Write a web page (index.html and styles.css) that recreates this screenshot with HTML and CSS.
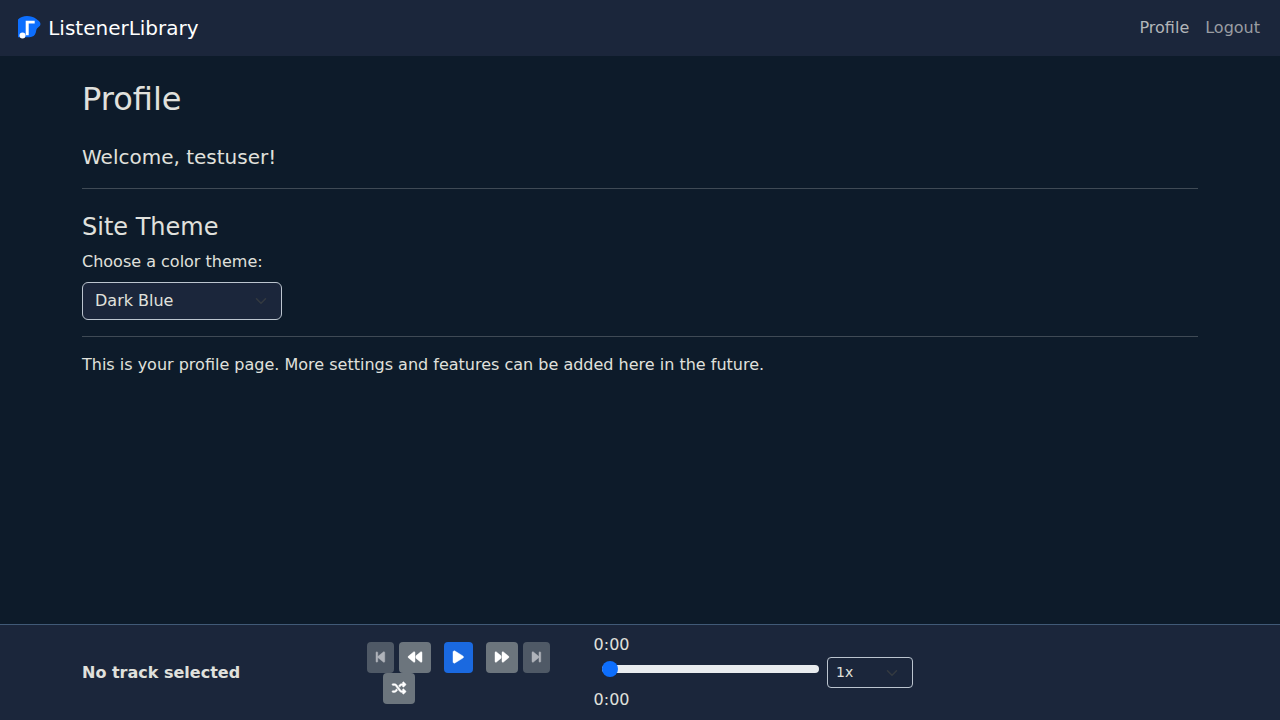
FILE: index.html
```html
<!DOCTYPE html>
<html lang="en">
<head>
<meta charset="utf-8">
<title>Profile - ListenerLibrary</title>
<link rel="stylesheet" href="styles.css">
</head>
<body>
<nav class="navbar">
  <a class="brand">
    <svg class="logo" width="24" height="24" viewBox="0 0 24 24">
      <path fill="#0d6efd" d="M1 3.500C3 1.200 6.500 0 10 0c3.500 0 6.500.8 9 2.700 2 1.500 4.500 3 4.500 5.300 0 2.200-2.300 3-3.500 4.400-.9 1.100-.8 2.600-1.200 4.200-.8 3-2.900 4.600-6.400 4.600H1z"/>
      <path fill="#fff" d="M8.700 4.700h9v2.700h-6v11.800h-3z"/>
      <circle cx="5.500" cy="19.500" r="3" fill="#fff"/>
    </svg>
    <span>ListenerLibrary</span>
  </a>
  <div class="links"><a class="link active">Profile</a><a class="link">Logout</a></div>
</nav>
<main class="content">
  <h1>Profile</h1>
  <p class="lead">Welcome, testuser!</p>
  <hr>
  <h2>Site Theme</h2>
  <div class="label">Choose a color theme:</div>
  <div class="select theme"><span>Dark Blue</span>
    <svg width="16" height="12" viewBox="0 0 16 16"><path d="m2 5 6 6 6-6"/></svg>
  </div>
  <hr>
  <p class="note">This is your profile page. More settings and features can be added here in the future.</p>
</main>
<footer class="player">
  <strong class="track">No track selected</strong>
  <div class="controls">
    <div class="buttons">
      <button class="btn step" disabled><svg width="8.750" height="14" viewBox="0 0 320 512"><path d="M267.500 440.600c9.500 7.900 22.800 9.700 34.100 4.400s18.400-16.600 18.400-29V96c0-12.400-7.200-23.700-18.400-29s-24.500-3.600-34.100 4.400l-192 160L64 241V96c0-17.700-14.300-32-32-32S0 78.300 0 96V416c0 17.700 14.300 32 32 32s32-14.300 32-32V271l11.500 9.600 192 160z"/></svg></button>
      <button class="btn"><svg width="14" height="14" viewBox="0 0 512 512"><path d="M459.500 440.600c9.500 7.900 22.800 9.700 34.100 4.400s18.400-16.600 18.400-29V96c0-12.400-7.200-23.700-18.400-29s-24.500-3.600-34.100 4.400L288 214.300V297.700L459.500 440.600zM256 352V96c0-12.400-7.200-23.700-18.400-29s-24.500-3.600-34.100 4.400l-192 160C4.200 237.500 0 246.500 0 256s4.200 18.500 11.500 24.600l192 160c9.500 7.900 22.800 9.700 34.100 4.400s18.400-16.600 18.400-29V352z"/></svg></button>
      <button class="btn play"><svg width="10.500" height="14" viewBox="0 0 384 512"><path d="M73 39c-14.800-9.100-33.400-9.400-48.500-.9S0 62.600 0 80V432c0 17.400 9.400 33.400 24.500 41.900s33.700 8.100 48.500-.9L361 297c14.300-8.700 23-24.200 23-41s-8.700-32.200-23-41L73 39z"/></svg></button>
      <button class="btn"><svg class="flip" width="14" height="14" viewBox="0 0 512 512"><path d="M459.500 440.600c9.500 7.900 22.800 9.700 34.100 4.400s18.400-16.600 18.400-29V96c0-12.400-7.200-23.700-18.400-29s-24.500-3.600-34.100 4.400L288 214.300V297.700L459.500 440.600zM256 352V96c0-12.400-7.200-23.700-18.400-29s-24.500-3.600-34.100 4.400l-192 160C4.200 237.500 0 246.500 0 256s4.200 18.500 11.500 24.600l192 160c9.500 7.900 22.800 9.700 34.100 4.400s18.400-16.600 18.400-29V352z"/></svg></button>
      <button class="btn step" disabled><svg class="flip" width="8.750" height="14" viewBox="0 0 320 512"><path d="M267.500 440.600c9.500 7.900 22.800 9.700 34.100 4.400s18.400-16.600 18.400-29V96c0-12.400-7.200-23.700-18.400-29s-24.500-3.600-34.100 4.400l-192 160L64 241V96c0-17.700-14.300-32-32-32S0 78.300 0 96V416c0 17.700 14.300 32 32 32s32-14.300 32-32V271l11.500 9.600 192 160z"/></svg></button>
    </div>
    <button class="btn shuffle"><svg width="14" height="14" viewBox="0 0 512 512"><path d="M403.800 34.400c12-5 25.700-2.200 34.900 6.900l64 64c6 6 9.400 14.100 9.400 22.600s-3.400 16.600-9.400 22.600l-64 64c-9.200 9.200-22.900 11.900-34.900 6.900s-19.800-16.600-19.800-29.600V160H352c-10.100 0-19.600 4.700-25.600 12.800L284 229.300 244 176l31.200-41.600C293.300 110.200 321.800 96 352 96h32V64c0-12.900 7.800-24.600 19.800-29.600zM164 282.700L204 336l-31.200 41.600C154.700 401.800 126.200 416 96 416H32c-17.700 0-32-14.300-32-32s14.300-32 32-32H96c10.100 0 19.600-4.700 25.600-12.800L164 282.700zm274.600 188c-9.200 9.200-22.900 11.900-34.900 6.900s-19.800-16.600-19.800-29.600V416H352c-30.200 0-58.700-14.200-76.800-38.400L121.600 172.800c-6-8.100-15.500-12.800-25.600-12.800H32c-17.700 0-32-14.300-32-32s14.300-32 32-32H96c30.200 0 58.700 14.200 76.800 38.400L326.400 339.200c6 8.100 15.500 12.800 25.600 12.800h32V320c0-12.900 7.800-24.600 19.800-29.600s25.700-2.200 34.900 6.900l64 64c6 6 9.400 14.100 9.400 22.600s-3.400 16.600-9.400 22.600l-64 64z"/></svg></button>
  </div>
  <div class="progress">
    <span>0:00</span>
    <input class="range" type="range" min="0" max="100" value="0">
    <span>0:00</span>
  </div>
  <div class="select speed"><span>1x</span>
    <svg width="16" height="12" viewBox="0 0 16 16"><path d="m2 5 6 6 6-6"/></svg>
  </div>
</footer>
</body>
</html>
```
FILE: styles.css
```css
* { box-sizing: border-box; }
body {
  margin: 0;
  height: 720px;
  display: flex;
  flex-direction: column;
  overflow: hidden;
  background: #0d1b2a;
  color: #e0e1dd;
  font: 16px/24px "DejaVu Sans", sans-serif;
}
.navbar {
  height: 56px;
  padding: 0 20px 0 17px;
  display: flex;
  align-items: center;
  justify-content: space-between;
  background: #1b263b;
}
.brand {
  display: flex;
  align-items: center;
  gap: 7.200px;
  color: #fff;
  font-size: 20px;
  line-height: 30px;
}
.logo { display: block; }
.links { display: flex; gap: 16px; }
.link { color: #9a9da2; }
.link.active { color: #b3b6b9; }
.content { flex: 1; padding: 24px 82px 0; }
h1, h2, p { margin: 0; font-weight: 400; }
h1 { font-size: 32px; line-height: 38.400px; margin-bottom: 24px; }
.lead { font-size: 20px; line-height: 30px; }
hr { height: 1px; margin: 16px 0; border: 0; background: #3f4a55; }
h2 { font-size: 24px; line-height: 28.800px; margin: 24px 0 8px; }
.label { margin-bottom: 8px; }
.select {
  display: flex;
  align-items: center;
  justify-content: space-between;
  background: #1b263b;
  border: 1px solid #bcc5cf;
  border-radius: 6px;
}
.select svg { fill: none; stroke: #343a40; stroke-width: 2; stroke-linecap: round; stroke-linejoin: round; }
.theme { width: 200px; height: 38px; padding: 0 12px; }
.player {
  height: 96px;
  padding: 8px 82px 0;
  display: flex;
  align-items: flex-start;
  background: #1b263b;
  border-top: 1px solid #415a77;
}
.track { width: 285px; margin-top: 28px; }
.controls { width: 226.600px; margin-top: 9px; }
.buttons { display: flex; gap: 5.100px; margin-left: .2px; }
.btn {
  height: 31px;
  padding: 0 9px 2px;
  display: flex;
  align-items: center;
  background: #6c757d;
  border: 0;
  border-radius: 4px;
}
.btn svg { display: block; overflow: visible; fill: #fff; stroke: #fff; stroke-width: 16; flex: none; }
.btn:disabled { opacity: .65; }
.flip { transform: scaleX(-1); }
.play { margin: 0 8px; background: #1a69e0; }
.shuffle { margin-left: 16px; }
.progress { width: 225.400px; display: flex; flex-direction: column; }
.range {
  width: 217px;
  height: 16px;
  margin: 4px 0 11px 8.400px;
  appearance: none;
  background: transparent;
}
.range::-webkit-slider-runnable-track {
  height: 8px;
  background: #e9ecef;
  border-radius: 16px;
}
.range::-webkit-slider-thumb {
  appearance: none;
  width: 16px;
  height: 16px;
  margin-top: -4px;
  border-radius: 50%;
  background: #0d6efd;
}
.speed {
  width: 86px;
  height: 31px;
  margin: 24px 0 0 8px;
  padding: 0 12px 0 8px;
  border-radius: 4px;
  font-size: 14px;
  line-height: 21px;
}
```
